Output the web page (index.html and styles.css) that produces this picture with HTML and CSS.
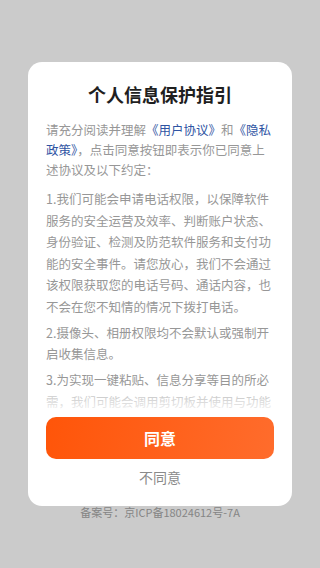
FILE: index.html
```html
<!DOCTYPE html>
<html lang="zh-CN">
<head>
<meta charset="utf-8">
<meta name="viewport" content="width=device-width, initial-scale=1">
<title>个人信息保护指引</title>
<link rel="stylesheet" href="styles.css">
</head>
<body>
<div class="page">
  <div class="card">
    <h1 class="title">个人信息保护指引</h1>
    <div class="scroll">
      <div class="scroll-inner">
        <p class="intro">请充分阅读并理解<span class="link">《用户协议》</span>和<span class="link">《隐私政策》</span>，点击同意按钮即表示你已同意上述协议及以下约定：</p>
        <p class="item">1.我们可能会申请电话权限，以保障软件服务的安全运营及效率、判断账户状态、身份验证、检测及防范软件服务和支付功能的安全事件。请您放心，我们不会通过该权限获取您的电话号码、通话内容，也不会在您不知情的情况下拨打电话。</p>
        <p class="item">2.摄像头、相册权限均不会默认或强制开启收集信息。</p>
        <p class="item">3.为实现一键粘贴、信息分享等目的所必需，我们可能会调用剪切板并使用与功能相关的最小必要信息。</p>
      </div>
    </div>
    <button class="btn-agree">同意</button>
    <button class="btn-disagree">不同意</button>
  </div>
  <div class="footer">备案号：京ICP备18024612号-7A</div>
</div>
</body>
</html>
```
FILE: styles.css
```css
* { box-sizing: border-box; }
html, body {
  margin: 0;
  padding: 0;
  background: #cbcbcb;
  font-family: "Noto Sans CJK SC", "Noto Sans", sans-serif;
}
.page {
  width: 320px;
  height: 568px;
  padding-top: 62px;
  display: flex;
  flex-direction: column;
  align-items: center;
}
.card {
  width: 264px;
  background: #ffffff;
  border-radius: 14px;
  padding: 20px 18px 19px;
  display: flex;
  flex-direction: column;
}
.title {
  margin: 0;
  font-size: 18px;
  line-height: 24px;
  font-weight: 700;
  color: #1f1f1f;
  text-align: center;
}
.scroll {
  position: relative;
  margin-top: 14px;
  height: 292px;
  overflow: hidden;
}
.scroll::after {
  content: "";
  position: absolute;
  left: 0;
  right: 0;
  bottom: 0;
  height: 24px;
  background: linear-gradient(to bottom, rgba(255,255,255,0.3), rgba(255,255,255,0.9));
}
.scroll-inner {
  font-size: 12.5px;
  color: #979797;
}
.intro {
  margin: 0 0 8px;
  line-height: 20px;
}
.item {
  margin: 0 0 4.5px;
  line-height: 21.5px;
}
.link {
  color: #2f54a3;
}
.btn-agree {
  margin-top: 5px;
  height: 42px;
  width: 100%;
  border: none;
  border-radius: 10px;
  background: linear-gradient(100deg, #ff5509, #ff6c2c);
  color: #ffffff;
  font-family: inherit;
  font-size: 16px;
  font-weight: 700;
  padding: 0;
}
.btn-disagree {
  margin-top: 8px;
  height: 20px;
  line-height: 20px;
  border: none;
  background: none;
  padding: 0;
  font-family: inherit;
  font-size: 14px;
  color: #8a8a8a;
}
.footer {
  font-size: 11px;
  line-height: 13px;
  color: #858585;
}
```
